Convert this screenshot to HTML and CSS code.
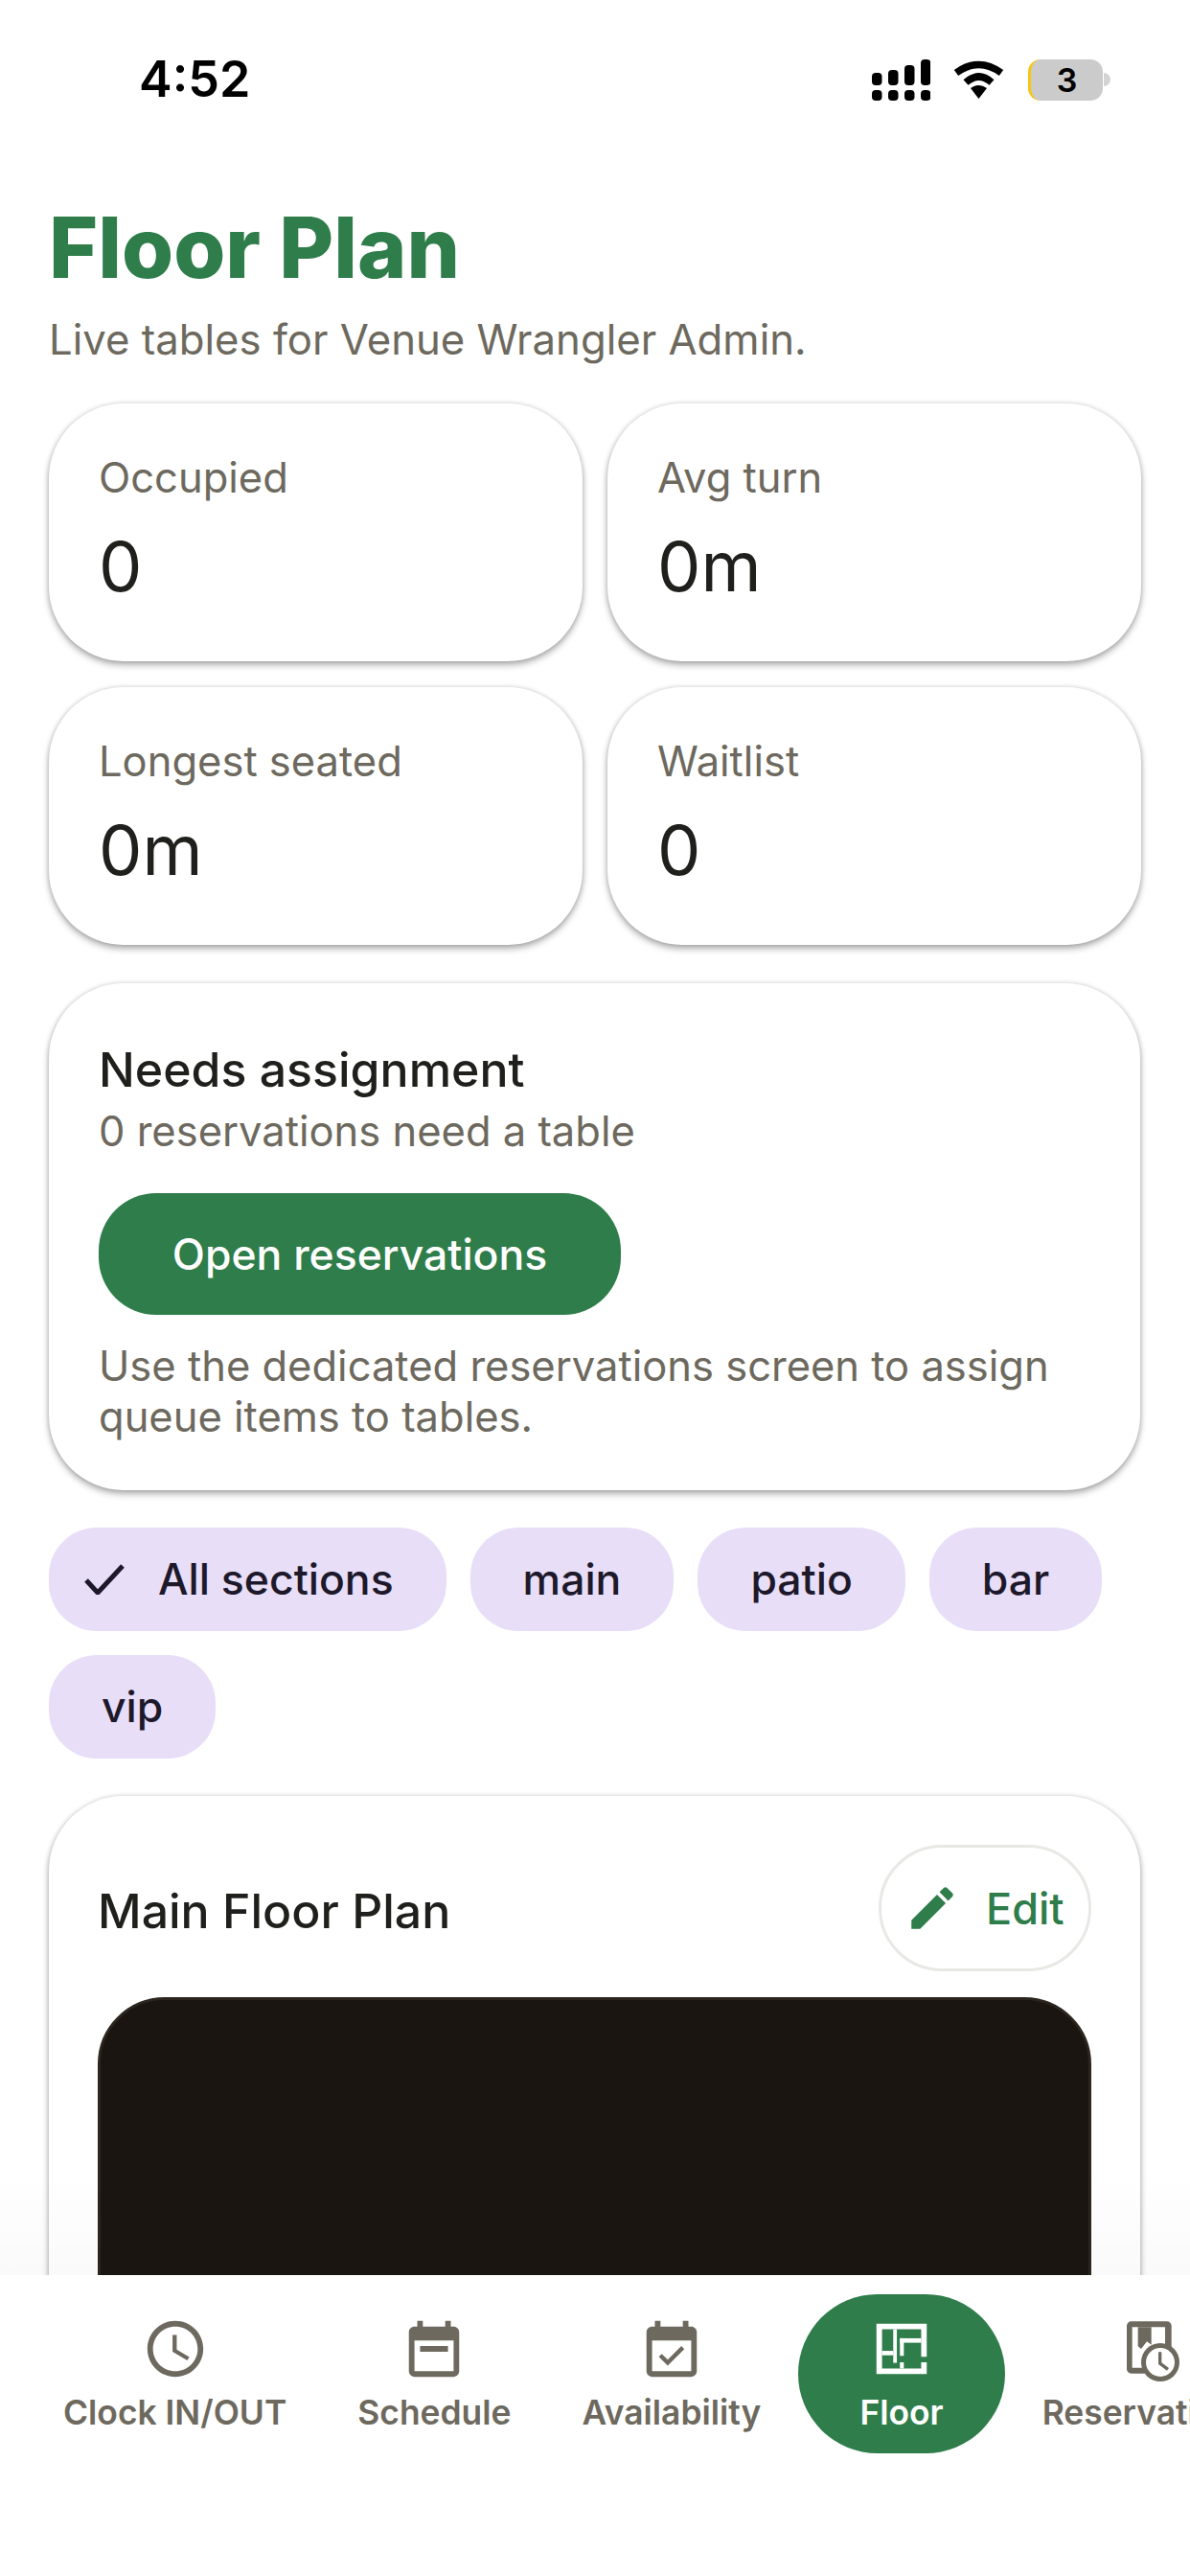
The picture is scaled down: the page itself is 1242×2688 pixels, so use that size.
FILE: index.html
```html
<!DOCTYPE html>
<html lang="en">
<head>
<meta charset="utf-8">
<title>Floor Plan</title>
<link rel="stylesheet" href="styles.css">
</head>
<body>
<div class="screen">
  <main class="scroll">
    <header class="status">
      <span class="time">4:52</span>
      <div class="status-icons">
        <svg class="signal" viewBox="0 0 61 43" aria-hidden="true">
          <rect x="0" y="14" width="10.5" height="13" rx="4"/><rect x="17" y="11" width="10.5" height="16" rx="4"/><rect x="34" y="6" width="10.5" height="21" rx="4"/><rect x="51" y="0" width="10.5" height="27" rx="4"/>
          <rect x="0" y="32" width="10.5" height="11" rx="4"/><rect x="17" y="32" width="10.5" height="11" rx="4"/><rect x="34" y="32" width="10.5" height="11" rx="4"/><rect x="51" y="32" width="10.5" height="11" rx="4"/>
        </svg>
        <svg class="wifi" viewBox="0 0 53 40" aria-hidden="true">
          <path class="wifi-arc" d="M3 13 Q26.500 -4 50 13"/>
          <path class="wifi-arc" d="M13 23 Q26.500 11 40 23"/>
          <path d="M18 29 Q26.500 23 35 29 L26.500 40Z"/>
        </svg>
        <div class="battery"><div class="battery-body">3</div><span class="battery-nub"></span></div>
      </div>
    </header>

    <h1 class="title">Floor Plan</h1>
    <p class="subtitle">Live tables for Venue Wrangler Admin.</p>

    <section class="stats">
      <div class="card stat"><div class="stat-label">Occupied</div><div class="stat-value">0</div></div>
      <div class="card stat"><div class="stat-label">Avg turn</div><div class="stat-value">0m</div></div>
      <div class="card stat"><div class="stat-label">Longest seated</div><div class="stat-value">0m</div></div>
      <div class="card stat"><div class="stat-label">Waitlist</div><div class="stat-value">0</div></div>
    </section>

    <section class="card assign">
      <h2 class="card-title">Needs assignment</h2>
      <p class="assign-sub">0 reservations need a table</p>
      <button class="primary" type="button">Open reservations</button>
      <p class="assign-help">Use the dedicated reservations screen to assign queue items to tables.</p>
    </section>

    <div class="chips">
      <button class="chip chip-selected" type="button">
        <svg class="chip-check" viewBox="0 0 42 32" aria-hidden="true"><path d="M2 17 L14 30 L40 2"/></svg>
        All sections
      </button>
      <button class="chip" type="button">main</button>
      <button class="chip" type="button">patio</button>
      <button class="chip" type="button">bar</button>
      <button class="chip" type="button">vip</button>
    </div>

    <section class="card plan">
      <div class="plan-head">
        <h2 class="card-title">Main Floor Plan</h2>
        <button class="edit" type="button">
          <svg class="edit-icon" viewBox="0 0 24 24" aria-hidden="true"><path d="M3 17.250V21h3.750L17.810 9.940l-3.750-3.750L3 17.250zM20.710 7.040c.39-.39.39-1.020 0-1.410l-2.340-2.340c-.39-.39-1.020-.39-1.410 0l-1.830 1.830 3.750 3.750 1.830-1.830z"/></svg>
          Edit
        </button>
      </div>
      <div class="canvas"></div>
    </section>
  </main>

  <nav class="nav">
    <a class="nav-item">
      <svg class="nav-icon" viewBox="0 0 24 24" aria-hidden="true"><path d="M11.990 2C6.470 2 2 6.480 2 12s4.470 10 9.990 10C17.520 22 22 17.520 22 12S17.520 2 11.990 2zM12 20c-4.420 0-8-3.580-8-8s3.580-8 8-8 8 3.580 8 8-3.580 8-8 8zm.5-13H11v6l5.250 3.150.75-1.230-4.500-2.670z"/></svg>
      <span>Clock IN/OUT</span>
    </a>
    <a class="nav-item">
      <svg class="nav-icon" viewBox="0 0 24 24" aria-hidden="true"><path d="M19 4h-1V2h-2v2H8V2H6v2H5c-1.110 0-2 .9-2 2v14c0 1.100.89 2 2 2h14c1.100 0 2-.9 2-2V6c0-1.100-.9-2-2-2zm0 16H5V9h14v11zM7 11h10v2H7z"/></svg>
      <span>Schedule</span>
    </a>
    <a class="nav-item">
      <svg class="nav-icon" viewBox="0 0 24 24" aria-hidden="true"><path d="M19 4h-1V2h-2v2H8V2H6v2H5c-1.110 0-2 .9-2 2v14c0 1.100.89 2 2 2h14c1.100 0 2-.9 2-2V6c0-1.100-.9-2-2-2zm0 16H5V9h14v11zM16.530 12.060L15.470 11l-4.880 4.880-2.120-2.120-1.060 1.060L10.590 18l5.940-5.940z"/></svg>
      <span>Availability</span>
    </a>
    <a class="nav-item nav-active">
      <svg class="nav-icon" viewBox="0 0 24 24" aria-hidden="true">
        <path fill-rule="evenodd" d="M3 3h18v11.800h-2V5H5v14h14v-2.200h2V21H3z"/>
        <rect x="9" y="5" width="1.300" height="12"/><rect x="5" y="12.700" width="4" height="1.600"/><rect x="11.400" y="8.200" width="7.600" height="1.600"/><rect x="11.400" y="8.200" width="1.400" height="6.300"/><rect x="11.400" y="16.800" width="1.400" height="2.200"/>
      </svg>
      <span>Floor</span>
    </a>
    <a class="nav-item">
      <svg class="nav-icon" viewBox="9 3 210 210" aria-hidden="true">
        <path fill-rule="evenodd" d="M59 22h112a14 14 0 0 1 14 14v135a14 14 0 0 1-14 14H59a14 14 0 0 1-14-14V36a14 14 0 0 1 14-14zM62 40v127h103V40z"/>
        <path d="M80 40h42v55l-14-10-18 23-10-8z"/>
        <circle cx="150" cy="150" r="60"/>
        <circle class="nav-clock-face" cx="150" cy="150" r="45"/>
        <path d="M144 118h10v33l23 17-6 8-27-20z"/>
      </svg>
      <span>Reservations</span>
    </a>
  </nav>
</div>
</body>
</html>
```

FILE: styles.css
```css
* { box-sizing: border-box; }

html, body {
  margin: 0;
  padding: 0;
  background: #ffffff;
}

body {
  font-family: Inter, "Liberation Sans", sans-serif;
  color: #1f1f1c;
}

.screen {
  width: 1242px;
  height: 2688px;
  display: flex;
  flex-direction: column;
  overflow: hidden;
  position: relative;
}

.scroll {
  flex: 1;
  min-height: 0;
  overflow: hidden;
  padding: 0 52px 0 51px;
  position: relative;
}

.scroll::after {
  content: "";
  position: absolute;
  left: 0;
  right: 0;
  bottom: 0;
  height: 110px;
  background: linear-gradient(rgba(0, 0, 0, 0), rgba(0, 0, 0, 0.02));
  pointer-events: none;
}

.status {
  height: 208px;
  padding: 53px 31px 0 94px;
  display: flex;
  justify-content: space-between;
  align-items: flex-start;
}

.time {
  font-size: 52px;
  line-height: 60px;
  font-weight: 600;
  color: #000;
}

.status-icons {
  height: 60px;
  display: flex;
  align-items: center;
}

.signal { width: 61px; height: 43px; fill: #000; margin-right: 24px; }
.wifi { width: 53px; height: 40px; fill: #000; margin-right: 25px; }
.wifi-arc { fill: none; stroke: #000; stroke-width: 7.500; }

.battery { display: flex; align-items: center; }

.battery-body {
  width: 78px;
  height: 43px;
  border-radius: 13px;
  background: #cbcbcb;
  border-left: 3px solid #f6c60f;
  color: #000;
  font-size: 34px;
  line-height: 43px;
  font-weight: 600;
  text-align: center;
}

.battery-nub {
  width: 7px;
  height: 14px;
  margin-left: 1px;
  border-radius: 0 7px 7px 0;
  background: #d4d4d4;
}

.title {
  margin: 0;
  font-size: 87.500px;
  line-height: 100px;
  font-weight: 800;
  color: #2e7d4a;
}

.subtitle {
  margin: 21px 0 40px;
  font-size: 43.700px;
  line-height: 52px;
  color: #6d695e;
}

.card {
  background: #fff;
  border-radius: 78px;
  box-shadow: 0 4px 7px rgba(0, 0, 0, 0.3), 0 0 5px rgba(0, 0, 0, 0.16);
}

.stats {
  display: grid;
  grid-template-columns: 557px 557px;
  column-gap: 26px;
  row-gap: 27px;
}

.stat {
  height: 269px;
  padding: 52px 52px 0;
}

.stat-label {
  font-size: 43.500px;
  line-height: 50px;
  color: #6d695e;
}

.stat-value {
  margin-top: 25px;
  font-size: 72px;
  line-height: 86px;
  color: #1f1f1c;
}

.assign {
  margin-top: 40px;
  padding: 61px 52px 50px;
}

.card-title {
  margin: 0;
  font-size: 50px;
  line-height: 58px;
  font-weight: 500;
  color: #1f1f1c;
}

.assign-sub {
  margin: 10px 0 40px;
  font-size: 43.500px;
  line-height: 50px;
  color: #6d695e;
}

.primary {
  display: block;
  width: 545px;
  height: 127px;
  border: 0;
  border-radius: 60px;
  background: #2e7d4a;
  color: #fff;
  font-family: inherit;
  font-size: 44.500px;
  font-weight: 500;
}

.assign-help {
  margin: 27px 0 0;
  font-size: 43.500px;
  line-height: 53px;
  color: #6d695e;
}

.chips {
  margin-top: 39px;
  display: flex;
  flex-wrap: wrap;
  gap: 25px;
}

.chip {
  height: 108px;
  padding: 0 55px;
  border: 0;
  border-radius: 50px;
  background: #e8def8;
  color: #1d192b;
  font-family: inherit;
  font-size: 44.500px;
  font-weight: 500;
  display: flex;
  align-items: center;
}

.chip-selected { padding: 0 55px 0 37px; }

.chip-check {
  width: 42px;
  height: 32px;
  margin-right: 35px;
  fill: none;
  stroke: #1d192b;
  stroke-width: 5;
}

.plan {
  margin-top: 39px;
  padding: 51px 51px 0;
  height: 700px;
}

.plan-head {
  display: flex;
  justify-content: space-between;
  align-items: center;
}

.plan-head .card-title { position: relative; top: 3px; }

.edit {
  width: 222px;
  height: 132px;
  padding: 0 0 0 24px;
  border: 3px solid #e8e8e5;
  border-radius: 66px;
  background: #fff;
  color: #2e7d4a;
  font-family: inherit;
  font-size: 45px;
  font-weight: 500;
  display: flex;
  align-items: center;
  gap: 27px;
}

.edit-icon { width: 58px; height: 58px; fill: #2e7d4a; flex: none; }

.canvas {
  margin-top: 27px;
  height: 600px;
  border-radius: 70px;
  background: #1a1510;
  border: 3px solid #2b251e;
}

.nav {
  height: 314px;
  flex: none;
  padding: 20px 0 0 31px;
  background: #fff;
  display: flex;
  align-items: flex-start;
  gap: 4px;
  overflow: hidden;
}

.nav-item {
  flex: none;
  height: 166px;
  padding: 22px 35px 0;
  display: flex;
  flex-direction: column;
  align-items: center;
  color: #6d695e;
  font-size: 35.400px;
  line-height: 42px;
  font-weight: 600;
}

.nav-icon {
  width: 70px;
  height: 70px;
  margin-bottom: 11px;
  fill: #6d695e;
  flex: none;
}

.nav-clock-face { fill: #fff; }

.nav-active {
  padding: 22px 64px 0;
  border-radius: 83px;
  background: #2e7d4a;
  color: #fff;
}

.nav-active .nav-icon { fill: #fff; }
```
